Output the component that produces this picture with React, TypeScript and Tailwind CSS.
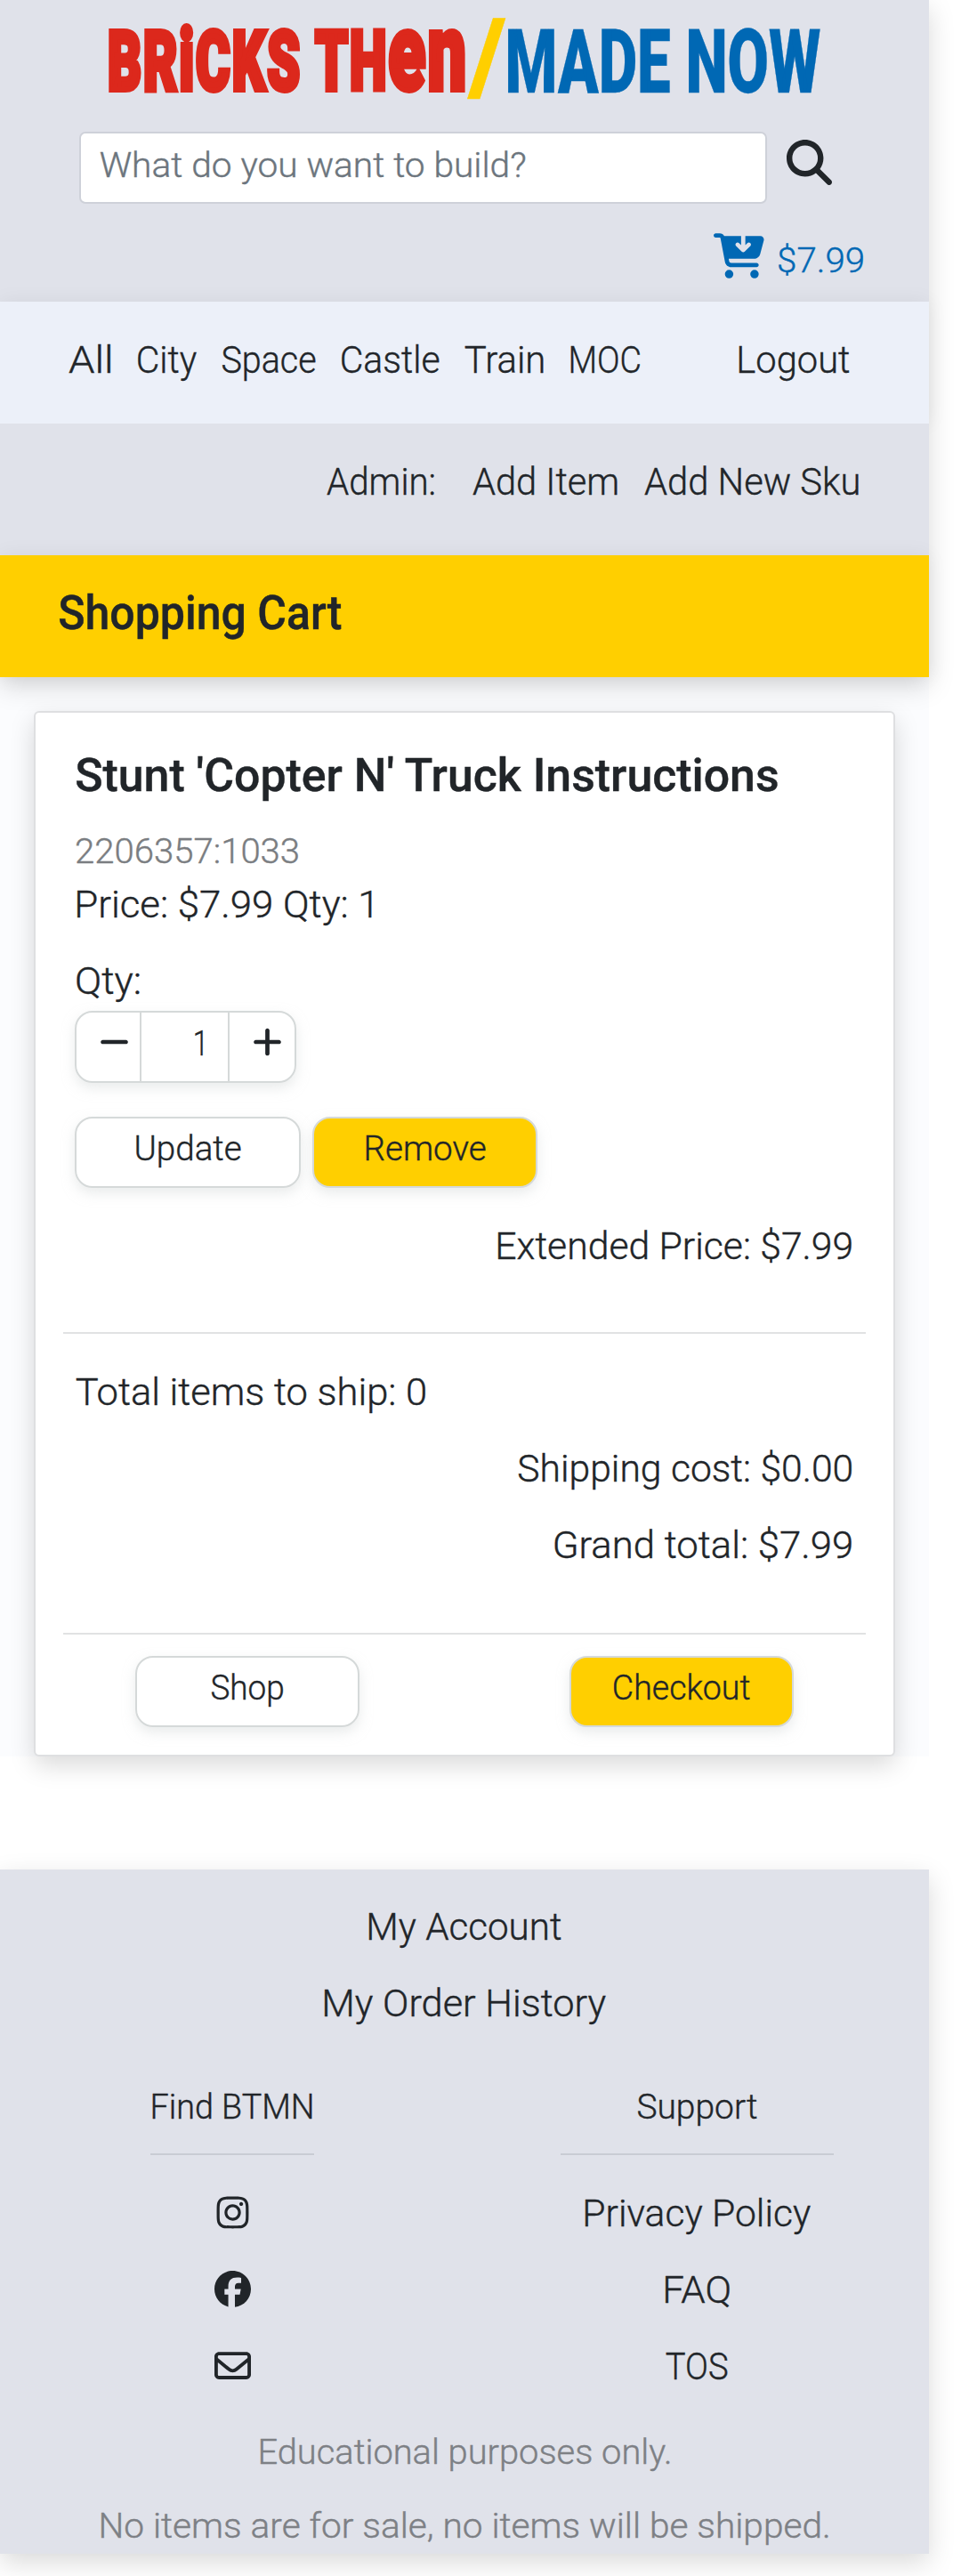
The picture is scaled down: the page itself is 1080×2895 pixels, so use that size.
import { useLayoutEffect, useRef, type ReactNode } from "react";
import {
  FaCartArrowDown,
  FaFacebook,
  FaInstagram,
  FaMagnifyingGlass,
  FaMinus,
  FaPlus,
  FaRegEnvelope,
} from "react-icons/fa6";

// A single line of text whose glyphs are stretched to fill the width of its box.
function Fit({ className, children }: { className: string; children: ReactNode }) {
  const outer = useRef<HTMLSpanElement>(null);
  const inner = useRef<HTMLSpanElement>(null);
  useLayoutEffect(() => {
    const box = outer.current!;
    const el = inner.current!;
    let left = 0;
    let ink = el.offsetWidth;
    if (typeof children === "string") {
      const cs = getComputedStyle(el);
      const ctx = document.createElement("canvas").getContext("2d")!;
      // Measured at ten times the size, since glyph bounds come back as whole pixels.
      ctx.font = `${cs.fontWeight} ${parseFloat(cs.fontSize) * 10}px ${cs.fontFamily}`;
      const m = ctx.measureText(children);
      // Halfway between the glyph bounds and the advance box.
      left = -m.actualBoundingBoxLeft / 20;
      ink = (m.actualBoundingBoxRight + m.actualBoundingBoxLeft + m.width) / 20;
    }
    const scale = box.clientWidth / ink;
    el.style.transform = `translateX(${-left * scale}px) scaleX(${scale})`;
  }, [children]);
  return (
    <span ref={outer} className={`block shrink-0 whitespace-nowrap ${className}`}>
      <span ref={inner} className="inline-block origin-left">
        {children}
      </span>
    </span>
  );
}

const line = "text-[42px] leading-[50px]";
const small = "text-[38px] leading-[50px]";
const button =
  "flex h-[80px] items-start justify-center rounded-[20px] border-2 border-[#d5d9d9] pt-[9px] shadow-[0_6px_14px_rgba(213,217,217,0.5)]";

function Header() {
  return (
    <header className="h-[339px] bg-[#e0e2ea]">
      <div className="flex h-[148px] items-baseline pl-[121px] pt-[13px] text-[100px] leading-[100px]">
        <Fit className="w-[405px] -translate-y-[3px] text-[93px] font-black tracking-[3px] text-[#dc281c] [-webkit-text-stroke:6px_#dc281c]">
          BR<span className="text-[97px]">i</span>CKS TH
          <span className="text-[122px]">en</span>
        </Fit>
        <Fit className="w-[43px] text-[117px] font-black text-[#ffcf00]">/</Fit>
        <Fit className="w-[353px] font-black text-[#0068b4]">MADE NOW</Fit>
      </div>
      <div className="flex h-[81px] pl-[89px]">
        <div className="h-[81px] w-[773px] rounded-[7px] border-2 border-[#ced1d9] bg-white pl-[21px] pt-[11px] text-[#6c757d]">
          <Fit className={`w-[479px] ${small}`}>What do you want to build?</Fit>
        </div>
        <FaMagnifyingGlass className="ml-[22px] mt-[9px] size-[51px]" />
      </div>
      <div className="flex justify-end pr-[73px] pt-[33px] text-[#0068b4]">
        <FaCartArrowDown className="h-[51px] w-[57px]" />
        <Fit className={`ml-[15px] mt-[6px] w-[97px] ${small}`}>$7.99</Fit>
      </div>
    </header>
  );
}

function Navigation() {
  return (
    <>
      <nav className={`relative flex h-[137px] bg-[#ecf0f9] pl-[77px] pt-[41px] shadow-[0_0_22px_rgba(0,0,0,0.06)] ${line}`}>
        <Fit className="w-[49px]">All</Fit>
        <Fit className="ml-[28px] w-[67px]">City</Fit>
        <Fit className="ml-[28px] w-[106px]">Space</Fit>
        <Fit className="ml-[28px] w-[111px]">Castle</Fit>
        <Fit className="ml-[28px] w-[90px]">Train</Fit>
        <Fit className="ml-[28px] w-[80px]">MOC</Fit>
        <Fit className="ml-[109px] w-[126px]">Logout</Fit>
      </nav>
      <div className={`relative flex h-[148px] bg-[#e0e2ea] pl-[367px] pt-[41px] ${line}`}>
        <Fit className="w-[122px]">Admin:</Fit>
        <Fit className="ml-[42px] w-[164px]">Add Item</Fit>
        <Fit className="ml-[29px] w-[242px]">Add New Sku</Fit>
      </div>
    </>
  );
}

function Cart() {
  return (
    <section className="ml-[38px] mt-[38px] h-[1175px] w-[968px] rounded-[6px] border-2 border-[#dedfe1] bg-white px-[31px] pt-[41px] shadow-[0_10px_28px_rgba(0,0,0,0.15)]">
      <div className="pl-[14px] pr-[15px]">
        <h2>
          <Fit className="w-[791px] text-[52px] font-medium leading-[60px]">Stunt 'Copter N' Truck Instructions</Fit>
        </h2>
        <Fit className={`mt-[30px] w-[251px] text-[#7a7d81] ${small}`}>2206357:1033</Fit>
        <Fit className={`mt-[10px] w-[337px] ${line}`}>Price: $7.99 Qty: 1</Fit>
        <Fit className={`mt-[36px] w-[73px] ${line}`}>Qty:</Fit>
        <div className="-ml-px mt-[8px] flex h-[81px] w-[249px] divide-x-2 divide-[#d5d9d9] rounded-[20px] border-2 border-[#d5d9d9] shadow-[0_6px_14px_rgba(213,217,217,0.5)]">
          <div className="w-[73px] pl-[26px] pt-[14px]">
            <FaMinus className="h-[38px] w-[33px]" />
          </div>
          <div className="w-[99px] pl-[59px] pt-[10px]">
            <Fit className={`w-[13px] ${small}`}>1</Fit>
          </div>
          <div className="flex-1 pl-[26px] pt-[14px]">
            <FaPlus className="h-[38px] w-[33px]" />
          </div>
        </div>
        <div className="-ml-px mt-[38px] flex gap-[13px]">
          <button className={`w-[254px] ${button}`}>
            <Fit className={`w-[119px] ${small}`}>Update</Fit>
          </button>
          <button className={`w-[253px] bg-[#ffcf00] ${button}`}>
            <Fit className={`w-[136px] ${small}`}>Remove</Fit>
          </button>
        </div>
        <Fit className={`ml-auto mt-[41px] w-[400px] ${line}`}>Extended Price: $7.99</Fit>
      </div>
      <hr className="mt-[71px] border-t-2 border-[#e1e2e3]" />
      <div className="pl-[14px] pr-[15px]">
        <Fit className={`mt-[41px] w-[394px] ${line}`}>Total items to ship: 0</Fit>
        <Fit className={`ml-auto mt-[36px] w-[376px] ${line}`}>Shipping cost: $0.00</Fit>
        <Fit className={`ml-auto mt-[36px] w-[336px] ${line}`}>Grand total: $7.99</Fit>
      </div>
      <hr className="mt-[73px] border-t-2 border-[#e1e2e3]" />
      <div className="mt-[24px] flex justify-between px-[81px]">
        <button className={`w-[252px] ${button}`}>
          <Fit className={`w-[82px] ${small}`}>Shop</Fit>
        </button>
        <button className={`w-[252px] bg-[#ffcf00] ${button}`}>
          <Fit className={`w-[154px] ${small}`}>Checkout</Fit>
        </button>
      </div>
    </section>
  );
}

function Footer() {
  return (
    <footer className="mt-[127px] h-[769px] w-[1044px] bg-[#e0e2ea] pt-[40px] shadow-[0_10px_28px_rgba(0,0,0,0.15)]">
      <Fit className={`mx-auto w-[218px] ${line}`}>My Account</Fit>
      <Fit className={`mx-auto mt-[36px] w-[318px] ${line}`}>My Order History</Fit>
      <div className="grid h-[380px] grid-cols-2 pt-[66px]">
        <div className="flex flex-col items-center">
          <Fit className={`w-[182px] ${small}`}>Find BTMN</Fit>
          <hr className="mt-[27px] w-[184px] border-t-2 border-[#c9ccd4]" />
          <FaInstagram className="mt-[44px] size-[41px]" />
          <FaFacebook className="mt-[45px] size-[41px]" />
          <FaRegEnvelope className="mt-[45px] size-[41px]" />
        </div>
        <div className="flex flex-col items-center">
          <Fit className={`w-[135px] ${small}`}>Support</Fit>
          <hr className="mt-[27px] w-[307px] border-t-2 border-[#c9ccd4]" />
          <Fit className={`mt-[41px] w-[255px] ${line}`}>Privacy Policy</Fit>
          <Fit className={`mt-[36px] w-[75px] ${line}`}>FAQ</Fit>
          <Fit className={`mt-[36px] w-[70px] ${line}`}>TOS</Fit>
        </div>
      </div>
      <div className="pt-[74px] text-[#7d8085]">
        <Fit className={`mx-auto w-[463px] ${small}`}>Educational purposes only.</Fit>
        <Fit className={`mx-auto mt-[33px] w-[820px] ${small}`}>
          No items are for sale, no items will be shipped.
        </Fit>
      </div>
    </footer>
  );
}

export default function App() {
  return (
    <div className="h-[2895px] w-[1080px] overflow-hidden bg-white font-['Roboto',sans-serif] font-light text-[#212529] [-webkit-text-stroke:0.4px]">
      <div className="flow-root h-[1974px] w-[1044px] bg-[#fbfcfe]">
        <div className="relative shadow-[0_10px_28px_rgba(0,0,0,0.15)]">
          <Header />
          <Navigation />
          <div className="relative h-[137px] bg-[#ffcf00] pl-[66px] pt-[35px] shadow-[0_0_22px_rgba(0,0,0,0.06)]">
            <h1>
              <Fit className="w-[318px] text-[53px] font-medium leading-[60px]">Shopping Cart</Fit>
            </h1>
          </div>
        </div>
        <Cart />
      </div>
      <Footer />
    </div>
  );
}
